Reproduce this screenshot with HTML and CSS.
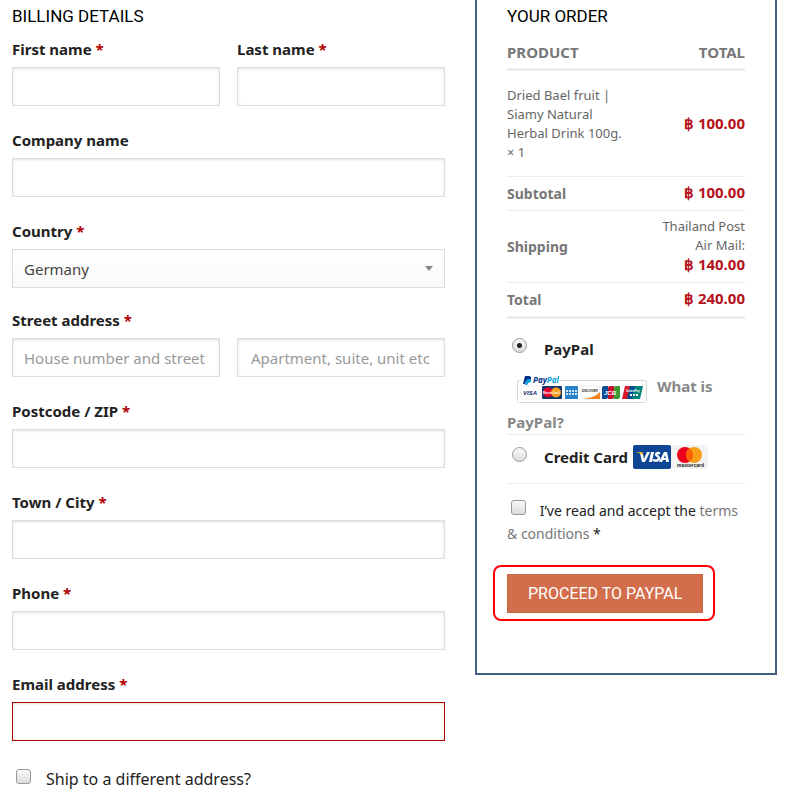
FILE: index.html
```html
<!DOCTYPE html>
<html lang="en">
<head>
  <meta charset="UTF-8">
  <meta name="viewport" content="width=device-width, initial-scale=1.0">
  <title>Checkout</title>
  <link rel="stylesheet" href="styles.css">
</head>
<body>
<form class="checkout">
  <div class="billing">
    <h3>Billing details</h3>
    <div class="row">
      <div class="field">
        <label for="first_name">First name <span class="required">*</span></label>
        <input type="text" id="first_name">
      </div>
      <div class="field">
        <label for="last_name">Last name <span class="required">*</span></label>
        <input type="text" id="last_name">
      </div>
    </div>
    <div class="field">
      <label for="company">Company name</label>
      <input type="text" id="company">
    </div>
    <div class="field country">
      <label for="country">Country <span class="required">*</span></label>
      <select id="country">
        <option>Germany</option>
      </select>
    </div>
    <div class="row">
      <div class="field">
        <label for="address_1">Street address <span class="required">*</span></label>
        <input type="text" id="address_1" placeholder="House number and street">
      </div>
      <div class="field no-label">
        <input type="text" id="address_2" aria-label="Apartment" placeholder="Apartment, suite, unit etc">
      </div>
    </div>
    <div class="field">
      <label for="postcode">Postcode / ZIP <span class="required">*</span></label>
      <input type="text" id="postcode">
    </div>
    <div class="field">
      <label for="city">Town / City <span class="required">*</span></label>
      <input type="text" id="city">
    </div>
    <div class="field">
      <label for="phone">Phone <span class="required">*</span></label>
      <input type="tel" id="phone">
    </div>
    <div class="field invalid">
      <label for="email">Email address <span class="required">*</span></label>
      <input type="email" id="email">
    </div>
    <div class="ship">
      <input type="checkbox" id="ship">
      <label for="ship">Ship to a different address?</label>
    </div>
  </div>

  <div class="order">
    <h3>Your order</h3>
    <table class="review">
      <thead>
        <tr><th>Product</th><th>Total</th></tr>
      </thead>
      <tbody>
        <tr class="item">
          <td>Dried Bael fruit | Siamy Natural Herbal Drink 100g. <span class="qty">× 1</span></td>
          <td><span class="amount">฿ 100.00</span></td>
        </tr>
      </tbody>
      <tfoot>
        <tr><th>Subtotal</th><td><span class="amount">฿ 100.00</span></td></tr>
        <tr class="shipping"><th>Shipping</th><td>Thailand Post Air Mail: <span class="amount">฿ 140.00</span></td></tr>
        <tr><th>Total</th><td><span class="amount">฿ 240.00</span></td></tr>
      </tfoot>
    </table>

    <ul class="payments">
      <li>
        <div class="method">
          <input type="radio" name="payment" id="pay_paypal" checked>
          <label for="pay_paypal">PayPal</label>
        </div>
        <div class="about">
          <svg class="paypal-mark" width="130" height="30" viewBox="0 0 130 30" role="img" aria-label="PayPal accepted cards">
            <rect x="0.500" y="5.500" width="129" height="22" rx="2" fill="#fff" stroke="#d5d5d5"/>
            <rect x="4" y="0" width="39" height="11" fill="#fff"/>
            <path d="M8 1h4c3 0 3 5-1 5h-2l-1 3H6z" fill="#003087"/>
            <path d="M10 4h3c2 1 1 4-2 4l-1 2H8z" fill="#009cde"/>
            <text x="16" y="8" class="pp"><tspan fill="#003087">Pay</tspan><tspan fill="#009cde">Pal</tspan></text>
            <rect x="4" y="11" width="19" height="13" rx="1" fill="#fff" stroke="#eee"/>
            <text x="6" y="20" class="mini" fill="#1a1f71">VISA</text>
            <rect x="25" y="11" width="20" height="13" rx="1" fill="#16366f"/>
            <circle cx="31" cy="17.500" r="5" fill="#e4002b"/>
            <circle cx="39" cy="17.500" r="5" fill="#f79e1b"/>
            <text x="26" y="19" class="tiny" fill="#fff">MasterCard</text>
            <rect x="48" y="11" width="13" height="13" fill="#2a82c9"/>
            <path d="M49 16h11M49 19h11" stroke="#cfe6f7" stroke-width="2" stroke-dasharray="2 1"/>
            <rect x="64" y="11" width="19" height="13" fill="#fff" stroke="#eee"/>
            <path d="M66 24c8-1 13-3 17-7v7z" fill="#f58220"/>
            <text x="65" y="17" class="tiny" fill="#222">DISCOVER</text>
            <path d="M87 11h4v11q0 2-2 2h-4V13q0-2 2-2z" fill="#0e4c96"/>
            <path d="M93 11h4v11q0 2-2 2h-4V13q0-2 2-2z" fill="#c8102e"/>
            <path d="M99 11h4v11q0 2-2 2h-4V13q0-2 2-2z" fill="#3a9b35"/>
            <text x="87" y="20" class="mini" fill="#fff">JCB</text>
            <path d="M108 11h8l-3 13h-8z" fill="#d7182a"/>
            <path d="M113 11h6l-3 13h-6z" fill="#00508f"/>
            <path d="M118 11h8l-3 13h-8z" fill="#00837b"/>
            <text x="109" y="17" class="tiny" fill="#fff">UnionPay</text>
            <path d="M113 20h8" stroke="#fff" stroke-width="2" stroke-dasharray="2 1"/>
          </svg>
          <a href="#">What is PayPal?</a>
        </div>
      </li>
      <li>
        <div class="method">
          <input type="radio" name="payment" id="pay_card">
          <label for="pay_card">Credit Card</label>
          <svg class="card" width="38" height="24" viewBox="0 0 38 24" role="img" aria-label="Visa">
            <rect width="38" height="24" rx="2" fill="#0e4595"/>
            <path d="M7 8l2 9h3l5-10h-3l-3 7-1-5q0-2-2-2H5q2 0 2 1z" fill="#fff"/>
            <path d="M3 7h5q2 0 2 3-3-2-7-3z" fill="#f2ae14"/>
            <path d="M18 7h3l-2 10h-3z" fill="#fff"/>
            <path d="M27 8.500c-2-.800-4-.500-4 1s3 1.500 3 3.500c0 3-4 3-6 2" fill="none" stroke="#fff" stroke-width="2.400"/>
            <path fill-rule="evenodd" d="M31 7h3l2 10h-3v-2h-3l-1 2h-3zM32 10l-1 3h2z" fill="#fff"/>
          </svg>
          <svg class="card" width="37" height="24" viewBox="0 0 37 24" role="img" aria-label="Mastercard">
            <rect width="37" height="24" rx="2" fill="#f3f3f3"/>
            <circle cx="14" cy="10" r="8" fill="#eb001b"/>
            <circle cx="23" cy="10" r="8" fill="#f79e1b"/>
            <path d="M18.500 3.400a8 8 0 0 1 0 13.200a8 8 0 0 1 0-13.200z" fill="#ff5f00"/>
            <text x="6" y="22" class="brand" fill="#222">mastercard</text>
          </svg>
        </div>
      </li>
    </ul>

    <div class="terms">
      <input type="checkbox" id="terms">
      <label for="terms">I’ve read and accept the <a href="#">terms &amp; conditions</a> *</label>
    </div>

    <div class="highlight">
      <button type="submit">Proceed to PayPal</button>
    </div>
  </div>
</form>
</body>
</html>
```
FILE: styles.css
```css
* {
  box-sizing: border-box;
}
body {
  margin: 0;
  background: #fff;
  color: #222;
  font-family: "Noto Sans", sans-serif;
  font-size: 14px;
}
.checkout {
  display: grid;
  grid-template-columns: minmax(0, 1fr) 302px;
  gap: 30px;
  align-items: start;
  padding: 0 9px 0 12px;
}
h3 {
  margin: 0;
  padding-top: 4px;
  color: #000;
  font-family: Roboto, sans-serif;
  font-size: 17px;
  font-weight: 400;
  line-height: 24px;
  text-transform: uppercase;
}

/* billing form */
.billing h3 {
  margin-bottom: 10px;
}
.row {
  display: grid;
  grid-template-columns: 1fr 1fr;
  gap: 17px;
}
.field {
  margin-bottom: 23px;
}
.field label {
  display: block;
  margin-bottom: 7px;
  font-size: 15px;
  font-weight: 700;
  line-height: 22px;
}
.required {
  color: #b20000;
}
.country {
  margin-bottom: 21px;
}
.no-label {
  padding-top: 29px;
}
.field input,
.field select {
  display: block;
  width: 100%;
  height: 39px;
  padding: 0 11px;
  border: 1px solid #ddd;
  border-radius: 0;
  background: #fff;
  box-shadow: inset 0 1px 3px rgba(0, 0, 0, 0.12);
  color: #333;
  font-family: "Noto Sans", sans-serif;
  font-size: 15px;
}
.field input::placeholder {
  color: #999;
  opacity: 1;
}
.no-label input {
  padding-left: 13px;
}
.field select {
  appearance: none;
  background: url("data:image/svg+xml,%3Csvg xmlns='http://www.w3.org/2000/svg' width='8' height='5'%3E%3Cpath d='M0 0h8l-4 5z' fill='%23888'/%3E%3C/svg%3E") no-repeat right 11px center, linear-gradient(#fff, #f9f9f9);
  box-shadow: none;
  color: #444;
}
.field.invalid input {
  border-color: #b20000;
}
.ship {
  display: flex;
  align-items: center;
  padding: 1px 0 0 4px;
  font-size: 16px;
  line-height: 28px;
}
.ship label {
  margin-left: 15px;
}

input[type="checkbox"],
input[type="radio"] {
  appearance: none;
  flex: none;
  width: 15px;
  height: 15px;
  margin: 0 0 6px;
  border: 1px solid #999;
  border-radius: 3px;
  background: linear-gradient(#f8f8f8, #ddd);
}
input[type="radio"] {
  border-radius: 50%;
}
input[type="radio"]:checked {
  background: radial-gradient(circle, #222 2px, transparent 3px), linear-gradient(#f8f8f8, #ddd);
}

/* order box */
.order {
  padding: 0 30px 52px;
  border: 2px solid #446084;
  border-top: 0;
}
.review {
  width: 100%;
  table-layout: fixed;
  margin-top: 11px;
  border-collapse: collapse;
  color: #666;
  font-size: 13px;
  line-height: 19px;
}
.review th,
.review td {
  padding: 6px 0 7px;
  border-bottom: 1px solid #ececec;
  text-align: left;
}
.review th {
  color: #777;
  font-size: 14px;
  font-weight: 700;
}
.review th:last-child,
.review td:last-child {
  width: 46%;
  text-align: right;
}
.review thead th {
  padding: 4px 0 6px;
  border-bottom: 3px solid #ececec;
  font-size: 15px;
  text-transform: uppercase;
}
.review .item td {
  padding: 15px 0 14px;
}
.review .shipping td {
  padding-left: 16px;
}
.review tfoot tr:last-child > * {
  border-bottom: 3px solid #ececec;
}
.qty {
  white-space: nowrap;
}
.amount {
  color: #b5121b;
  font-size: 15px;
  font-weight: 700;
  white-space: nowrap;
}

.payments {
  margin: 0;
  padding: 0;
  list-style: none;
  font-size: 15px;
  font-weight: 700;
}
.payments li {
  border-bottom: 1px solid #ececec;
}
.method {
  display: flex;
  align-items: center;
  height: 48px;
  padding: 0 0 4px 5px;
}
.payments li:first-child .method {
  height: 47px;
  padding-top: 12px;
  padding-bottom: 0;
}
.method label {
  margin-right: 5px;
  margin-left: 17px;
}
.about {
  line-height: 24px;
}
.about a {
  color: #888;
  text-decoration: none;
}
.paypal-mark {
  margin: 9px 6px 5px 10px;
  vertical-align: middle;
}
.pp {
  font: italic 700 8px "Open Sans", sans-serif;
}
.mini {
  font: italic 700 6px "Liberation Sans", sans-serif;
}
.tiny {
  font: 700 3px "Liberation Sans", sans-serif;
}
.brand {
  font: 700 5px "Liberation Sans", sans-serif;
}
.terms {
  padding: 15px 0 20px;
  line-height: 23px;
}
.terms input {
  margin: 0 10px 0 4px;
  vertical-align: 1px;
}
.terms a {
  color: #777;
  text-decoration: none;
}
.highlight {
  width: fit-content;
  margin-left: -14px;
  padding: 7px 10px 6px 12px;
  border: 2px solid #f00;
  border-radius: 8px;
}
.highlight button {
  display: block;
  height: 39px;
  padding: 0 20px;
  border: 1px solid #c96745;
  background: #d26e4b;
  color: #fff;
  font-family: Roboto, sans-serif;
  font-size: 16px;
  text-transform: uppercase;
}
```
